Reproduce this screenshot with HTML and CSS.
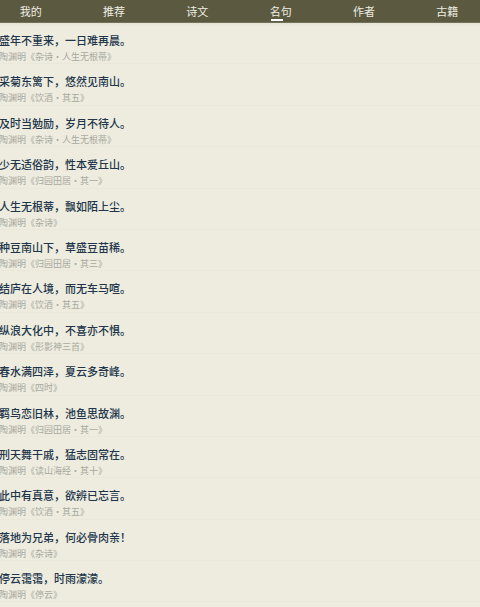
FILE: index.html
```html
<!DOCTYPE html>
<html lang="zh">
<head>
<meta charset="utf-8">
<link rel="stylesheet" href="styles.css">
</head>
<body>
<div class="page">
  <nav class="tabs">
    <div class="tab">我的</div>
    <div class="tab">推荐</div>
    <div class="tab">诗文</div>
    <div class="tab active"><span class="label">名句</span></div>
    <div class="tab">作者</div>
    <div class="tab">古籍</div>
  </nav>
  <ul class="list">
    <li class="item"><div class="quote">盛年不重来，一日难再晨。</div><div class="src">陶渊明《杂诗·人生无根蒂》</div></li>
    <li class="item"><div class="quote">采菊东篱下，悠然见南山。</div><div class="src">陶渊明《饮酒·其五》</div></li>
    <li class="item"><div class="quote">及时当勉励，岁月不待人。</div><div class="src">陶渊明《杂诗·人生无根蒂》</div></li>
    <li class="item"><div class="quote">少无适俗韵，性本爱丘山。</div><div class="src">陶渊明《归园田居·其一》</div></li>
    <li class="item"><div class="quote">人生无根蒂，飘如陌上尘。</div><div class="src">陶渊明《杂诗》</div></li>
    <li class="item"><div class="quote">种豆南山下，草盛豆苗稀。</div><div class="src">陶渊明《归园田居·其三》</div></li>
    <li class="item"><div class="quote">结庐在人境，而无车马喧。</div><div class="src">陶渊明《饮酒·其五》</div></li>
    <li class="item"><div class="quote">纵浪大化中，不喜亦不惧。</div><div class="src">陶渊明《形影神三首》</div></li>
    <li class="item"><div class="quote">春水满四泽，夏云多奇峰。</div><div class="src">陶渊明《四时》</div></li>
    <li class="item"><div class="quote">羁鸟恋旧林，池鱼思故渊。</div><div class="src">陶渊明《归园田居·其一》</div></li>
    <li class="item"><div class="quote">刑天舞干戚，猛志固常在。</div><div class="src">陶渊明《读山海经·其十》</div></li>
    <li class="item"><div class="quote">此中有真意，欲辨已忘言。</div><div class="src">陶渊明《饮酒·其五》</div></li>
    <li class="item"><div class="quote">落地为兄弟，何必骨肉亲！</div><div class="src">陶渊明《杂诗》</div></li>
    <li class="item"><div class="quote">停云霭霭，时雨濛濛。</div><div class="src">陶渊明《停云》</div></li>
  </ul>
</div>
</body>
</html>
```
FILE: styles.css
```css
html, body {
  margin: 0;
  padding: 0;
  background: #edecdf;
  overflow: hidden;
}
body {
  font-family: "Noto Sans CJK SC", "Noto Sans", sans-serif;
}
.page {
  margin-left: -11px;
  width: 500px;
}
.tabs {
  display: grid;
  grid-template-columns: repeat(6, 1fr);
  height: 22px;
  background: #5b5a40;
  border-bottom: 1px solid #74735a;
}
.tab {
  color: #efeee4;
  font-size: 11px;
  line-height: 22px;
  text-align: center;
}
.tab .label {
  position: relative;
  display: inline-block;
}
.tab.active .label::after {
  content: "";
  position: absolute;
  left: 1px;
  top: 19px;
  width: 12px;
  height: 1.5px;
  background: #ffffff;
}
.list {
  list-style: none;
  margin: 0;
  padding: 0;
  background: linear-gradient(#e4e3d4, #edecdf 4px);
}
.item {
  box-sizing: border-box;
  height: 41.4px;
  padding: 10px 0 0 10px;
  border-bottom: 1px solid #e9e8da;
}
.quote {
  font-size: 11px;
  line-height: 14px;
  font-weight: 500;
  color: #22354a;
  margin-bottom: 4px;
}
.src {
  font-size: 9px;
  line-height: 12px;
  color: #a9a99e;
}
```
